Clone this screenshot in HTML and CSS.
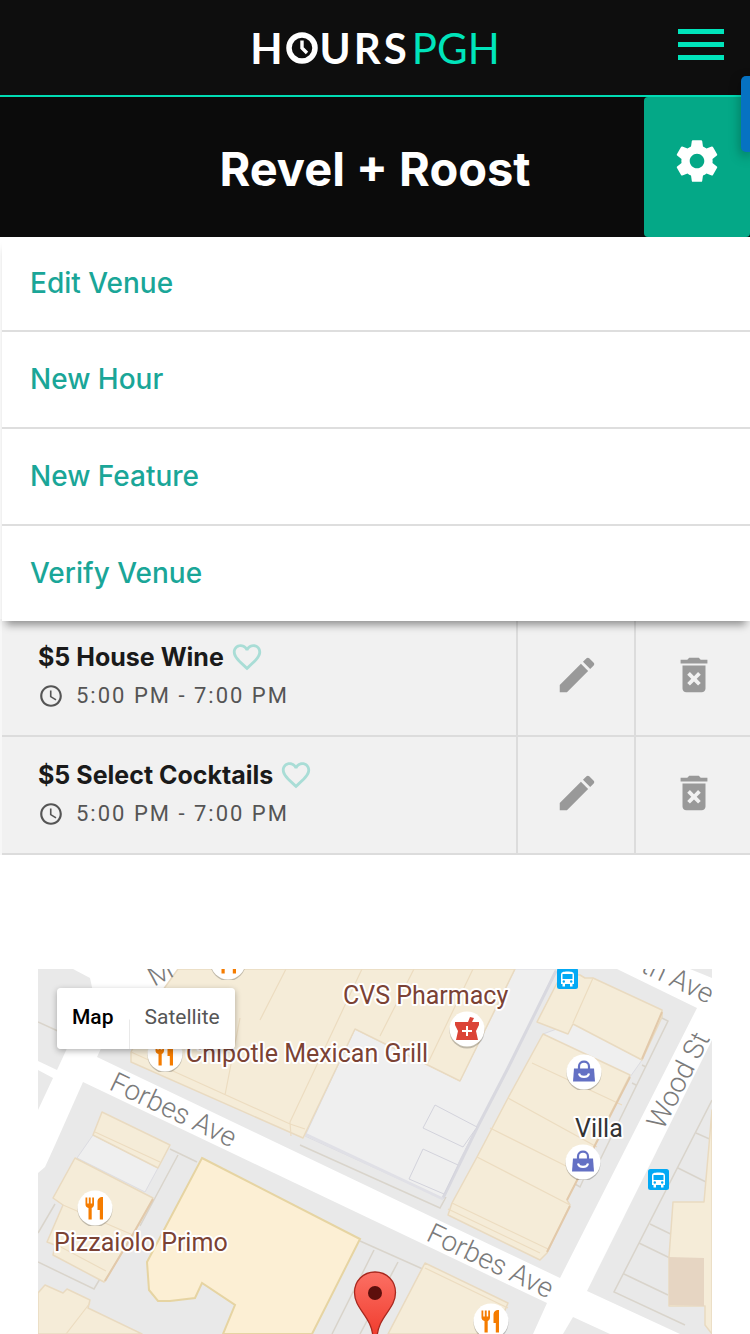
FILE: index.html
```html
<!DOCTYPE html>
<html lang="en">
<head>
<meta charset="utf-8">
<meta name="viewport" content="width=device-width, initial-scale=1">
<title>Revel + Roost – HoursPGH</title>
<link rel="stylesheet" href="styles.css">
</head>
<body>
<svg class="defs" aria-hidden="true">
  <symbol id="heart" viewBox="0 0 24 24"><path d="M16.5 3c-1.74 0-3.41.81-4.5 2.09C10.91 3.81 9.24 3 7.5 3 4.42 3 2 5.42 2 8.5c0 3.78 3.4 6.86 8.55 11.54L12 21.35l1.45-1.32C18.6 15.36 22 12.28 22 8.5 22 5.42 19.58 3 16.5 3zm-4.4 15.55l-.1.1-.1-.1C7.14 14.24 4 11.39 4 8.5 4 6.5 5.5 5 7.5 5c1.54 0 3.04.99 3.57 2.36h1.87C13.46 5.99 14.96 5 16.5 5c2 0 3.500 1.500 3.500 3.500 0 2.890-3.140 5.740-7.900 10.050z"/></symbol>
  <symbol id="clock" viewBox="0 0 24 24"><path d="M11.990 2C6.470 2 2 6.480 2 12s4.470 10 9.990 10C17.520 22 22 17.520 22 12S17.520 2 11.990 2zM12 20c-4.420 0-8-3.580-8-8s3.580-8 8-8 8 3.580 8 8-3.580 8-8 8zm.5-13H11v6l5.250 3.150.75-1.230-4.500-2.670z"/></symbol>
  <symbol id="pencil" viewBox="0 0 24 24"><path d="M3 17.250V21h3.750L17.810 9.940l-3.750-3.750L3 17.250zM20.710 7.040c.39-.39.39-1.020 0-1.410l-2.340-2.340c-.39-.39-1.020-.39-1.410 0l-1.830 1.830 3.750 3.750 1.830-1.830z"/></symbol>
  <symbol id="trash" viewBox="0 0 24 24"><path d="M6 19c0 1.100.9 2 2 2h8c1.100 0 2-.9 2-2V7H6v12zm2.460-7.120l1.410-1.410L12 12.590l2.120-2.120 1.410 1.410L13.410 14l2.120 2.120-1.410 1.410L12 15.410l-2.120 2.120-1.410-1.410L10.590 14l-2.130-2.120zM15.500 4l-1-1h-5l-1 1H5v2h14V4z"/></symbol>
  <symbol id="food" viewBox="-18 -18 36 36"><circle cy="1.500" r="17.500" fill="#00000038"/><circle r="17.500" fill="#fff"/><path fill="#f57c00" d="M-9.500-10.500h1.800v6h1.500v-6h1.900v6h1.500v-6h1.800v7c0 2-1 3-2.300 3.400V11.500h-3.200V-.1C-8.500-.5-9.500-1.500-9.500-3.500zM8-11V11.500H4.800V2H2.500V-6C2.500-9 4-11 8-11z"/></symbol>
  <symbol id="shop" viewBox="-18 -18 36 36"><circle cy="1.500" r="17.500" fill="#00000038"/><circle r="17.500" fill="#fff"/><path fill="none" stroke="#6370c4" stroke-width="2.200" d="M-5-2v-3.500C-5-12 5-12 5-5.500V-2"/><path fill="#6370c4" d="M-10-3.500h20L11 9.500h-22z"/><path fill="none" stroke="#fff" stroke-width="2.200" d="M-5 1.500C-4 6 4 6 5 1.500"/></symbol>
  <symbol id="bus" viewBox="0 0 21 21"><rect width="21" height="21" rx="2.500" fill="#03a9f4"/><path fill="#fff" d="M4 7c0-3 2-3.500 6.500-3.500S17 4 17 7v9h-1.500v2.500H13V16H8v2.500H5.500V16H4z"/><path fill="#03a9f4" d="M5.500 6h10v5h-10z"/><circle cx="6.800" cy="13.500" r="1.200" fill="#03a9f4"/><circle cx="14.200" cy="13.500" r="1.200" fill="#03a9f4"/></symbol>
</svg>

<header class="site-header">
  <a class="logo" href="#" aria-label="HoursPGH">
    <span class="logo-hours">H</span>
    <svg class="logo-clock" viewBox="0 0 32 32" aria-hidden="true"><circle cx="16" cy="16" r="13" fill="none" stroke="#fff" stroke-width="5.500"/><path d="M16 8.500V16l5 5" fill="none" stroke="#fff" stroke-width="3.400"/></svg>
    <span class="logo-hours">URS</span>
    <span class="logo-pgh">PGH</span>
  </a>
  <button class="menu-toggle" type="button" aria-label="Open menu"><span></span><span></span><span></span></button>
</header>
<button class="side-tab" type="button" aria-label="Open side panel"></button>

<main class="venue">
  <div class="title-bar">
    <h1>Revel + Roost</h1>
    <button class="settings" type="button" aria-label="Venue settings">
      <svg viewBox="0 0 24 24" aria-hidden="true"><path d="M19.430 12.980c.04-.32.07-.64.07-.98s-.03-.66-.07-.98l2.110-1.650c.19-.15.24-.42.12-.64l-2-3.460c-.12-.22-.39-.3-.61-.22l-2.490 1c-.52-.4-1.080-.73-1.690-.98l-.38-2.650C14.460 2.180 14.250 2 14 2h-4c-.25 0-.46.18-.49.42l-.38 2.650c-.61.25-1.170.59-1.690.98l-2.490-1c-.23-.09-.49 0-.61.22l-2 3.460c-.13.22-.07.49.12.64l2.110 1.650c-.04.32-.07.65-.07.98s.03.66.07.98l-2.110 1.650c-.19.15-.24.42-.12.64l2 3.460c.12.22.39.3.61.22l2.490-1c.52.4 1.080.73 1.690.98l.38 2.650c.03.24.24.42.49.42h4c.25 0 .46-.18.49-.42l.38-2.650c.61-.25 1.170-.59 1.690-.98l2.490 1c.23.09.49 0 .61-.22l2-3.460c.12-.22.07-.49-.12-.64l-2.110-1.650zM12 15.500c-1.930 0-3.500-1.570-3.500-3.500s1.570-3.500 3.500-3.500 3.500 1.570 3.500 3.500-1.570 3.500-3.500 3.500z"/></svg>
    </button>
  </div>

  <nav class="actions" aria-label="Venue actions">
    <a href="#">Edit Venue</a>
    <a href="#">New Hour</a>
    <a href="#">New Feature</a>
    <a href="#">Verify Venue</a>
  </nav>

  <ul class="specials">
    <li>
      <div class="special">
        <div class="special-name"><h2>$5 House Wine</h2><button type="button" aria-label="Favorite $5 House Wine"><svg><use href="#heart"/></svg></button></div>
        <p><svg aria-hidden="true"><use href="#clock"/></svg>5:00 PM - 7:00 PM</p>
      </div>
      <button class="tool" type="button" aria-label="Edit $5 House Wine"><svg><use href="#pencil"/></svg></button>
      <button class="tool" type="button" aria-label="Delete $5 House Wine"><svg><use href="#trash"/></svg></button>
    </li>
    <li>
      <div class="special">
        <div class="special-name"><h2>$5 Select Cocktails</h2><button type="button" aria-label="Favorite $5 Select Cocktails"><svg><use href="#heart"/></svg></button></div>
        <p><svg aria-hidden="true"><use href="#clock"/></svg>5:00 PM - 7:00 PM</p>
      </div>
      <button class="tool" type="button" aria-label="Edit $5 Select Cocktails"><svg><use href="#pencil"/></svg></button>
      <button class="tool" type="button" aria-label="Delete $5 Select Cocktails"><svg><use href="#trash"/></svg></button>
    </li>
  </ul>

  <section class="map" aria-label="Map">
    <svg class="map-canvas" viewBox="38 969 674 365">
      <rect x="38" y="969" width="674" height="365" fill="#fff"/>
      <g fill="#e9e9e9">
        <path d="M38 969H73L90 978 93 992 57 1070 38 1061z"/>
        <path d="M38 1070L53 1078 38 1110z"/>
        <path d="M97 1057L104 1042 163 990 178 969H617L697 1008 560 1278z"/>
        <path d="M83 1082L547 1303 533 1334H38V1173L45 1167 55 1145z"/>
        <path d="M690 969H712V978z"/>
        <path d="M712 1040V1334H680L587 1291z"/>
        <path d="M573 1317L610 1334H563z"/>
      </g>
      <g fill="none" stroke="#d9d4cb" stroke-width="1.500">
        <path d="M38 1022L60 1032M170 1149L197 1162M178 1155L140 1226M38 1262L94 1289 104 1272M55 1204L38 1233"/>
        <path d="M300 1145L440 1208 446 1197M360 1241L425 1270M374 1250L332 1334M398 1262L360 1334"/>
        <path d="M662 1018L668 1021 600 1160M642 1065L646 1067M632 1083L636 1085M575 1184L580 1187 590 1165M712 1100L614 1292 685 1325M678 1168L706 1182M650 1224L712 1254M639 1243L672 1259M624 1274L668 1295"/>
        <path d="M696 1133L712 1140"/>
      </g>
      <g fill="#efefef" stroke="#dcdce2">
        <path d="M515 969H556L500 1085 477 1127 460 1160 443 1199 305 1136 355 1029 460 1081z"/>
        <path d="M93 1135L158 1168 145 1192 77 1158z"/>
        <path d="M543 1034L573 1023 642 1060 630 1077z"/>
      </g>
      <g fill="none" stroke="#d8d8df" stroke-width="3">
        <path d="M556 971L508 1068 478 1126 443 1198"/>
        <path d="M305 1134L407 1182 443 1199" stroke="#e0e0e6"/>
      </g>
      <path d="M409 1179L423 1149 458 1165 444 1194zM423 1128L435 1105 477 1127 463 1147z" fill="#efefef" stroke="#d3d3dc"/>
      <g fill="#f5ecd8" stroke="#e9dac0" stroke-width="1.500" stroke-linejoin="round">
        <path d="M178 969H515L460 1081 355 1029 303 1138 131 1062V1052L163 990z"/>
        <path d="M557 983L567 974 580 975 585 978 593 978 662 1010V1017L642 1060 573 1024 568 1034 537 1022z"/>
        <path d="M543 1034L630 1075 567 1200 570 1205 547 1253 540 1260 448 1215 452 1203 477 1157 508 1098z"/>
        <path d="M102 1112L170 1145 158 1168 93 1135z"/>
        <path d="M75 1158L153 1198 133 1235 104 1282 53 1255 55 1245 47 1242 63 1205 53 1198z"/>
        <path d="M38 1293L45 1285 63 1293 67 1289 90 1300 88 1308 142 1334H38z"/>
        <path d="M425 1263L508 1303 495 1334H388z"/>
        <path d="M673 1202H704L709 1145 712 1110V1334L705 1325V1306H669V1257z"/>
      </g>
      <path d="M669 1257L704 1258V1306L669 1305z" fill="#e6d5c2"/>
      <g fill="none" stroke="#ecdcc0" stroke-width="1.200">
        <path d="M286 969L260 1020M362 969L290 1122 291 1136M414 969L380 1036M473 969L427 1065M240 1018L225 1095M131 1052L290 1124 305 1129"/>
        <path d="M593 978L573 1023M532 1063L622 1105M508 1098L597 1147M490 1128L568 1167M477 1157L570 1205M452 1203L548 1249M448 1209L540 1253"/>
        <path d="M63 1205L133 1235M57 1245L106 1271M90 1303L66 1334M95 1132L160 1162M425 1268L508 1308"/>
      </g>
      <g fill="none" stroke="#e2c9aa" stroke-width="2">
        <path d="M662 1012L642 1059M630 1077L567 1200M570 1206L547 1252M153 1199L133 1234 105 1281"/>
      </g>
      <path d="M202 1158L360 1239 312 1334H223L235 1305 202 1283 195 1298 170 1301H158L149 1290 147 1262z" fill="#fcefd4" stroke="#e6d4a2" stroke-width="2"/>

      <g class="street">
        <text transform="translate(108 1089) rotate(25.500)">Forbes Ave</text>
        <text transform="translate(425 1240) rotate(25.500)">Forbes Ave</text>
        <text transform="translate(663 1131) rotate(-63)">Wood St</text>
        <text transform="translate(708 1004) rotate(25.500)" text-anchor="end">th Ave</text>
        <text transform="translate(154 987) rotate(-28)">M</text>
      </g>
      <use href="#food" x="210" y="944" width="36" height="36"/>
      <use href="#food" x="147" y="1036" width="36" height="36"/>
      <use href="#food" x="77" y="1190" width="36" height="36"/>
      <use href="#food" x="473" y="1303" width="36" height="36"/>
      <use href="#shop" x="566" y="1054" width="36" height="36"/>
      <use href="#shop" x="565" y="1144" width="36" height="36"/>
      <use href="#bus" x="557" y="968" width="21" height="21"/>
      <use href="#bus" x="648" y="1169" width="21" height="21"/>
      <circle cx="467" cy="1031" r="17.500" fill="#00000038"/>
      <circle cx="467" cy="1029" r="17.500" fill="#fff"/>
      <path fill="#db4437" d="M455 1022H468L470 1017 474 1018 472 1022H479V1025L476 1031 478 1040H456L458 1031 455 1025z"/>
      <path stroke="#fff" stroke-width="2" d="M467 1026V1036M462 1031H472"/>
      <g class="place">
        <text x="343" y="1004">CVS Pharmacy</text>
        <text x="186" y="1062">Chipotle Mexican Grill</text>
        <text x="54" y="1251">Pizzaiolo Primo</text>
        <text class="place-shop" x="575" y="1137">Villa</text>
      </g>
      <defs><linearGradient id="pin" x1="0" y1="0" x2="0" y2="1"><stop offset="0" stop-color="#fb7064"/><stop offset="1" stop-color="#f03a2c"/></linearGradient></defs>
      <path d="M375 1272c-12 0-20.500 9-20.500 20.500 0 17 18 24 18.500 46h4c.5-22 18.500-29 18.500-46C395.500 1281 387 1272 375 1272z" fill="url(#pin)" stroke="#a8281e" stroke-width="1.300"/>
      <circle cx="375" cy="1293" r="7" fill="#5d0f0c"/>
    </svg>
    <div class="map-types">
      <button class="is-active" type="button">Map</button>
      <button type="button">Satellite</button>
    </div>
  </section>
</main>
</body>
</html>
```
FILE: styles.css
```css
* { box-sizing: border-box; }
body { margin: 0; background: #fff; color: #1a1a1a; font-family: Inter, "Open Sans", sans-serif; position: relative; overflow-x: hidden; }
h1, h2, p, ul { margin: 0; padding: 0; }
button { margin: 0; padding: 0; border: 0; background: none; font: inherit; color: inherit; cursor: pointer; }
a { text-decoration: none; }
.defs { position: absolute; width: 0; height: 0; }

.site-header { display: grid; grid-template-columns: 1fr auto 1fr; align-items: center; height: 97px; background: #0e0e0e; border-bottom: 2px solid #00dcb4; }
.logo { grid-column: 2; display: flex; align-items: center; color: #fff; font-family: Lato, sans-serif; font-size: 42px; line-height: 48px; }
.logo-hours { font-weight: 700; letter-spacing: 3px; }
.logo-clock { width: 32px; height: 32px; margin-right: 2px; }
.logo-pgh { margin-left: 2px; color: #00e4bb; font-weight: 400; }
.menu-toggle { justify-self: end; display: flex; flex-direction: column; gap: 8px; margin: 0 26px 6px 0; width: 46px; }
.menu-toggle span { height: 5px; background: #00e4bb; }
.side-tab { position: absolute; top: 76px; right: 0; z-index: 3; width: 9px; height: 76px; background: #0672c2; border-radius: 5px 0 0 5px; box-shadow: 0 4px 12px rgba(0, 0, 0, .35); }

.title-bar { display: grid; grid-template-columns: 106px 1fr 106px; align-items: stretch; height: 140px; background: #0b0b0b; }
.title-bar h1 { grid-column: 2; align-self: center; padding-top: 4px; color: #fff; font-size: 47px; line-height: 60px; font-weight: 700; text-align: center; }
.settings { display: flex; align-items: center; justify-content: center; padding-bottom: 12px; background: #04a887; border-radius: 4px; }
.settings svg { width: 50px; height: 50px; fill: #fff; }

.actions { position: relative; z-index: 2; display: flex; flex-direction: column; margin: 0 0 -2px 2px; background: #fff; box-shadow: 0 8px 8px -4px rgba(0, 0, 0, .4); }
.actions a { display: flex; align-items: center; height: 97px; padding: 0 28px 2px; border-bottom: 2px solid #dedede; color: #1aa698; font-size: 28px; line-height: 40px; font-weight: 500; }
.actions a:first-child { height: 95px; }
.actions a:last-child { height: 95px; border-bottom: 0; }

.specials { list-style: none; border-left: 2px solid #f7f7f7; }
.specials li { display: grid; grid-template-columns: 1fr 118px 116px; min-height: 118px; background: #f1f1f1; border-bottom: 2px solid #dcdcdc; }
.special { padding: 18px 12px 20px 36px; }
.special-name { display: flex; align-items: center; gap: 6px; }
.special-name h2 { font-size: 25px; line-height: 40px; font-weight: 700; }
.special-name svg { display: block; width: 34px; height: 34px; fill: #a9ddd6; }
.special p { display: flex; align-items: center; gap: 12px; color: #555; font-family: Roboto, sans-serif; font-size: 22px; line-height: 38px; letter-spacing: 2px; }
.special p svg { width: 26px; height: 26px; fill: #555; }
.tool { display: flex; align-items: center; justify-content: center; padding: 0 0 4px 2px; border-left: 2px solid #dcdcdc; }
.tool svg { width: 46px; height: 46px; fill: #999; }

.map { position: relative; margin: 114px 38px 0; font-family: Roboto, sans-serif; }
.map-canvas { display: block; width: 100%; height: auto; }
.map-types { position: absolute; top: 19px; left: 19px; display: flex; gap: 1px; color: #565656; font-size: 21px; line-height: 26px; border-radius: 4px; box-shadow: 0 2px 6px rgba(0, 0, 0, .3); }
.map-types button { padding: 16px 15px 19px; background: #fff; border-radius: 0 4px 4px 0; }
.map-types .is-active { color: #000; font-weight: 500; border-radius: 4px 0 0 4px; }
.street { fill: #7b7b7b; font-size: 28px; font-weight: 300; }
.place { fill: #7b4234; font-size: 25px; stroke: #fff; stroke-width: 4px; stroke-linejoin: round; paint-order: stroke; }
.place-shop { fill: #333; }
```
